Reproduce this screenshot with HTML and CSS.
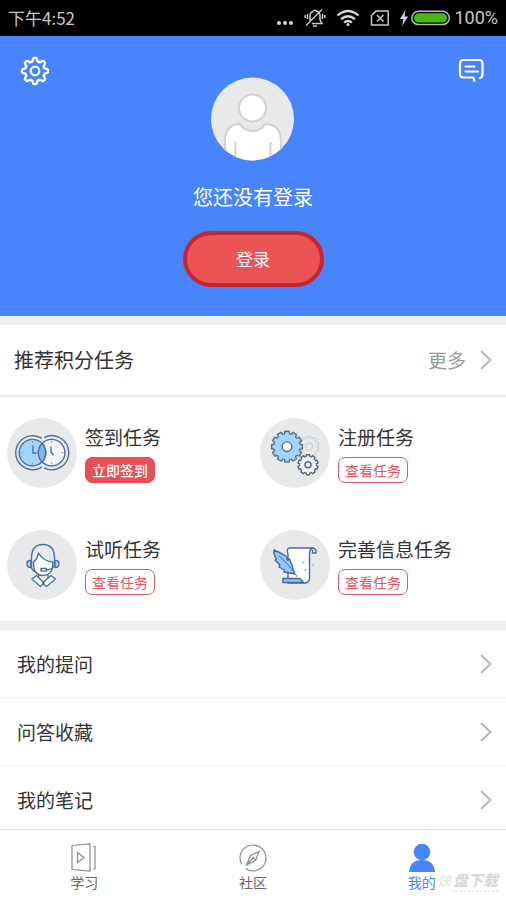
FILE: index.html
```html
<!DOCTYPE html>
<html lang="zh-CN">
<head>
<meta charset="utf-8">
<meta name="viewport" content="width=device-width, initial-scale=1">
<title>我的</title>
<link rel="stylesheet" href="styles.css">
</head>
<body>
<svg class="defs" aria-hidden="true">
  <defs>
    <path id="tooth8" d="M-3.800 -9.200C-2.900 -8.800 -2.500 -9.400 -2.300 -10.400L-1.900 -12.200Q-1.700 -13 -1 -13H1Q1.700 -13 1.900 -12.200L2.300 -10.400C2.500 -9.400 2.900 -8.800 3.800 -9.200"/>
    <path id="tooth12" d="M-3.3 -12.4L-2.5 -13L-2.1 -15.4H2.1L2.5 -13L3.3 -12.4"/>
    <path id="tooth10" d="M-2.6 -7.9L-1.9 -8.3L-1.5 -10H1.5L1.9 -8.3L2.6 -7.9"/>
    <g id="gear8">
      <use href="#tooth8"/><use href="#tooth8" transform="rotate(45)"/><use href="#tooth8" transform="rotate(90)"/><use href="#tooth8" transform="rotate(135)"/><use href="#tooth8" transform="rotate(180)"/><use href="#tooth8" transform="rotate(225)"/><use href="#tooth8" transform="rotate(270)"/><use href="#tooth8" transform="rotate(315)"/>
    </g>
    <g id="gear12">
      <circle r="13" stroke="none"/>
      <use href="#tooth12"/><use href="#tooth12" transform="rotate(30)"/><use href="#tooth12" transform="rotate(60)"/><use href="#tooth12" transform="rotate(90)"/><use href="#tooth12" transform="rotate(120)"/><use href="#tooth12" transform="rotate(150)"/><use href="#tooth12" transform="rotate(180)"/><use href="#tooth12" transform="rotate(210)"/><use href="#tooth12" transform="rotate(240)"/><use href="#tooth12" transform="rotate(270)"/><use href="#tooth12" transform="rotate(300)"/><use href="#tooth12" transform="rotate(330)"/>
    </g>
    <g id="gear10">
      <circle r="8.2" stroke="none"/>
      <use href="#tooth10"/><use href="#tooth10" transform="rotate(36)"/><use href="#tooth10" transform="rotate(72)"/><use href="#tooth10" transform="rotate(108)"/><use href="#tooth10" transform="rotate(144)"/><use href="#tooth10" transform="rotate(180)"/><use href="#tooth10" transform="rotate(216)"/><use href="#tooth10" transform="rotate(252)"/><use href="#tooth10" transform="rotate(288)"/><use href="#tooth10" transform="rotate(324)"/>
    </g>
  </defs>
</svg>

<div class="status">
  <span class="time">下午4:52</span>
  <div class="status-icons">
    <svg width="18" height="20" viewBox="0 0 18 20" fill="#d0d0d0"><circle cx="3" cy="15" r="2"/><circle cx="9" cy="15" r="2"/><circle cx="15" cy="15" r="2"/></svg>
    <svg width="22" height="20" viewBox="0 0 22 20" fill="none" stroke="#c8c8c8" stroke-width="1.5"><path d="M6 14V8Q6 4 9 3.500Q10 1.500 12.500 3Q16 4 16 8V12L18 15.500H8M9 18H13M2 17.500L18 1.500M3.500 6V11M1.200 7V10M18.500 6V11M20.800 7V10"/></svg>
    <svg width="24" height="20" viewBox="0 0 24 20" fill="none" stroke="#d8d8d8" stroke-width="2.300"><path d="M1.500 7.500Q12 -1.500 22.500 7.500M5 11.200Q12 5.200 19 11.200M8.200 14.600Q12 11.400 15.800 14.600"/><circle cx="12" cy="16.500" r="1.500" fill="#d8d8d8" stroke="none"/></svg>
    <svg width="20" height="20" viewBox="0 0 20 20" fill="none" stroke="#c8c8c8" stroke-width="1.500"><path d="M6 3H18.200V17H1.500V7.500ZM7 7L13.500 13.500M13.500 7L7 13.500"/></svg>
    <svg class="battery" width="48" height="20" viewBox="0 0 48 20"><path d="M5.500 2L0 11H3.500L2 18L8 8.500H4.500Z" fill="#d8d8d8"/><rect x="11.800" y="3.200" width="37.500" height="13.400" rx="6.700" fill="none" stroke="#b8b8b8" stroke-width="1.500"/><rect x="14" y="5.300" width="33" height="9.200" rx="4.600" fill="#45b814"/></svg>
    <span class="percent">100%</span>
  </div>
</div>

<main class="page">
  <header class="profile">
    <button class="icon-button" aria-label="设置">
      <svg width="30" height="30" viewBox="-15 -15 30 30" fill="none" stroke="#fff" stroke-width="2.300" stroke-linejoin="round" stroke-linecap="round"><use href="#gear8"/><circle r="4.300"/></svg>
    </button>
    <div class="account">
      <svg class="avatar" width="84" height="84" viewBox="0 0 84 84">
        <defs><clipPath id="round"><circle cx="41.500" cy="42" r="41.500"/></clipPath></defs>
        <g clip-path="url(#round)" stroke="#d2d2d2" stroke-width="2">
          <rect width="84" height="84" fill="#e8e9eb" stroke="none"/>
          <path d="M14 86V65Q14 47 29 47Q33 54 41.500 54Q50 54 54 47Q70 47 70 65V86Z" fill="#fff"/>
          <circle cx="41.500" cy="31" r="13.500" fill="#fff"/>
          <path d="M24.500 65V84M59.500 65V84" fill="none"/>
        </g>
      </svg>
      <p class="greeting">您还没有登录</p>
      <button class="login">登录</button>
    </div>
    <button class="icon-button" aria-label="消息">
      <svg width="30" height="30" viewBox="0 0 30 30" fill="none" stroke="#fff" stroke-width="2.200" stroke-linecap="round" stroke-linejoin="round"><path d="M24 22Q26.500 21 26.500 18V7.500Q26.500 4 23 4H7.500Q4 4 4 7.500V18Q4 21.500 7.500 21.500H17Q18 21.500 18.200 25M9.500 10.500H18.500M9.500 15.500H22"/></svg>
    </button>
  </header>

  <section class="block">
    <div class="block-head">
      <h2>推荐积分任务</h2>
      <a class="more" href="#more">更多
        <svg class="chevron" width="12" height="20" viewBox="0 0 12 20"><path d="M1 1L10.500 10L1 19"/></svg>
      </a>
    </div>
    <div class="tasks">
      <article class="task">
        <svg class="task-icon" viewBox="0 0 70 70">
          <circle cx="35" cy="35" r="35" fill="#e8e9eb"/>
          <g fill="none" stroke="#4d6f9b" stroke-width="1.400">
            <circle cx="44.600" cy="34.700" r="13.300" fill="#f3f4f6"/>
            <circle cx="25.500" cy="34.700" r="13.300" fill="#a3d4fb"/>
            <path d="M35 25.500A13.300 13.300 0 0 0 35 44A13.300 13.300 0 0 0 35 25.500" fill="#83b9e8"/>
            <path d="M34.800 20.300A17 17 0 1 0 34.800 49.100M37.200 19.500A17 17 0 1 1 37.200 49.900"/>
            <path d="M26 27.500V35H29.500M44 28.500V34L46.500 37"/>
            <path d="M25.500 23V25M25.500 44.500V46.500M14 34.700H16M44.600 23V25M44.600 44.500V46.500M54.500 34.700H56.500" stroke="#8199b5" stroke-width="1"/>
          </g>
        </svg>
        <div class="task-body"><h3>签到任务</h3><button class="tag tag-solid">立即签到</button></div>
      </article>
      <article class="task">
        <svg class="task-icon" viewBox="0 0 70 70">
          <circle cx="35" cy="35" r="35" fill="#e8e9eb"/>
          <g transform="translate(49 28.500)" fill="#e8e9eb" stroke="#cfd2d6" stroke-width="1.200"><use href="#gear10"/><circle r="3.500"/></g>
          <g transform="translate(27 28.700)" fill="#a3d4fb" stroke="#526f93" stroke-width="1.400" stroke-linejoin="round"><use href="#gear12"/><circle r="4.800" fill="#fff"/></g>
          <g transform="translate(48 46.700)" fill="#f0f1f3" stroke="#526580" stroke-width="1.400" stroke-linejoin="round"><use href="#gear10"/><circle r="3"/></g>
        </svg>
        <div class="task-body"><h3>注册任务</h3><button class="tag">查看任务</button></div>
      </article>
      <article class="task">
        <svg class="task-icon" viewBox="0 0 70 70">
          <circle cx="35" cy="35" r="35" fill="#e8e9eb"/>
          <g fill="none" stroke="#4b719f" stroke-width="1.400" stroke-linejoin="round">
            <path d="M26.500 32Q30 30 31.500 23Q36 31 45.800 32Q46.500 45 36 45.500Q26 45 26.500 32Z" fill="#fff"/>
            <path d="M24.500 38V28Q24.500 14.500 36 14.500Q47.500 14.500 47.500 28V35Q47 39 40 40M24.500 38Q25.500 41 29 42"/>
            <path d="M24 30.500H22.500Q20 31 20 34Q20 37.500 24 37.500ZM48 30.500H49.500Q52 31 52 34Q52 37.500 48 37.500Z" fill="#a3d4fb"/>
            <rect x="34" y="38.500" width="5.500" height="2.600" fill="#fff"/>
            <path d="M31.500 45V47.500M41 45V47.500"/>
            <path d="M25 49L29.500 45.500L37 53L33.500 56.500ZM48.500 49L44 45.500L35.500 53L39.500 56.500Z" fill="#fff"/>
          </g>
        </svg>
        <div class="task-body"><h3>试听任务</h3><button class="tag">查看任务</button></div>
      </article>
      <article class="task">
        <svg class="task-icon" viewBox="0 0 70 70">
          <circle cx="35" cy="35" r="35" fill="#e8e9eb"/>
          <g fill="none" stroke="#416b9e" stroke-width="1.400" stroke-linejoin="round" stroke-linecap="round">
            <path d="M30 18H53Q49.500 19 49.500 24V48Q49.500 53 45 53H28V24Q26 18 30 18Z" fill="#fff"/>
            <path d="M52 18Q56.500 18 56 23H52.500V20.500"/>
            <path d="M23 48.500H40L43.500 52.500H23Z" fill="#94bdf3"/>
            <path d="M14 20Q21 23 26 26L27.500 30L29.500 29L32 35L33 39L34.500 44L30 43L24 42L24.500 40L19 37L20 35L15 30L16.500 29Q13.500 25 14 20Z" fill="#91c9fc"/>
            <path d="M19 26Q29 34 37 46.500" stroke-width="1"/>
          </g>
          <g fill="#bdc6d3"><circle cx="43.500" cy="32.500" r="1.300"/><circle cx="53" cy="35" r="1.300"/><circle cx="45.500" cy="40" r="1.300"/></g>
        </svg>
        <div class="task-body"><h3>完善信息任务</h3><button class="tag">查看任务</button></div>
      </article>
    </div>
  </section>

  <nav class="block links" aria-label="我的内容">
    <a href="#questions">我的提问<svg class="chevron" width="12" height="20" viewBox="0 0 12 20"><path d="M1 1L10.500 10L1 19"/></svg></a>
    <a href="#favorites">问答收藏<svg class="chevron" width="12" height="20" viewBox="0 0 12 20"><path d="M1 1L10.500 10L1 19"/></svg></a>
    <a href="#notes">我的笔记<svg class="chevron" width="12" height="20" viewBox="0 0 12 20"><path d="M1 1L10.500 10L1 19"/></svg></a>
  </nav>
</main>

<nav class="tabs" aria-label="主导航">
  <a href="#study">
    <svg width="28" height="30" viewBox="0 0 28 30" fill="none" stroke="#8c8c8c" stroke-width="1.200"><path d="M2 2.500L20 1V28L2 26.500ZM23 3.500H25V26H23M7.500 9.500V19.500L14 14.500Z"/></svg>
    学习
  </a>
  <a href="#community">
    <svg width="28" height="30" viewBox="0 0 28 30" fill="none" stroke="#8c8c8c" stroke-width="1.200"><circle cx="14" cy="15" r="13" stroke-dasharray="28 6 48"/><path d="M20 8.500L16.500 17.500L7.500 22L11.500 12.500ZM7.500 22L14.500 14.500L16.500 17.500"/></svg>
    社区
  </a>
  <a class="active" href="#me" aria-current="page">
    <svg width="28" height="30" viewBox="0 0 28 30" fill="#4684fb"><circle cx="14" cy="9" r="8.300"/><path d="M1 29Q2 17 14 17Q26 17 27 29Z"/></svg>
    我的
  </a>
  <div class="watermark"><span class="leaf">快</span><span class="site">盘下载</span></div>
</nav>
</body>
</html>
```
FILE: styles.css
```css
* { box-sizing: border-box; }

body {
  margin: 0;
  height: 100vh;
  display: flex;
  flex-direction: column;
  background: #fff;
  color: #333;
  font-family: "Noto Sans CJK SC", sans-serif;
  font-size: 19px;
  line-height: 28px;
}

h2, h3, p { margin: 0; font-size: inherit; font-weight: 400; }
a { color: inherit; text-decoration: none; }
button { font: inherit; cursor: pointer; }
svg { display: block; flex: none; }
.defs { position: absolute; width: 0; height: 0; }

.status {
  flex: none;
  display: flex;
  align-items: center;
  justify-content: space-between;
  height: 36px;
  padding: 0 8px;
  background: #000;
  color: #c8c8c8;
  font-size: 17px;
}
.status-icons { display: flex; align-items: center; gap: 10px; }
.battery { margin-right: -4px; overflow: visible; }
.percent { font-family: Roboto, sans-serif; font-size: 18px; }

.page { flex: 1; min-height: 0; overflow-y: auto; scrollbar-width: none; }

.profile {
  display: flex;
  align-items: flex-start;
  justify-content: space-between;
  padding: 20px 20px 29px;
  background: #4885fd;
  color: #fff;
}
.icon-button { padding: 0; border: 0; background: none; }
.account {
  display: flex;
  flex-direction: column;
  align-items: center;
  padding-top: 21px;
}
.greeting { margin: 22px 0 20px; font-size: 20px; }
.login {
  width: 141px;
  height: 56px;
  border: 4px solid #c7252d;
  border-radius: 28px;
  background: #eb5355;
  color: #fff;
  font-size: 17px;
}

.block { border-top: 9px solid #efefef; }
.block-head {
  display: flex;
  align-items: center;
  justify-content: space-between;
  height: 72px;
  padding: 0 14px;
  border-bottom: 2px solid #e9e9e9;
}
.block-head h2 { font-size: 20px; }
.more { display: flex; align-items: center; gap: 14px; color: #999; }
.chevron path { fill: none; stroke: #b4b4b4; stroke-width: 2; }

.tasks {
  display: grid;
  grid-template-columns: 1fr 1fr;
  row-gap: 42px;
  padding: 21px 0;
}
.task { display: flex; gap: 8px; padding-left: 7px; }
.task-icon { width: 70px; height: 70px; }
.task-body { padding-top: 5px; }
.tag {
  display: block;
  width: 70px;
  height: 26px;
  margin-top: 6px;
  padding: 0;
  border: 1px solid #e0575c;
  border-radius: 7px;
  background: #fff;
  color: #e0575c;
  font-size: 14px;
  line-height: 24px;
}
.tag-solid { background: #e94f57; border-color: #e94f57; color: #fff; font-weight: 500; }

.links a {
  display: flex;
  align-items: center;
  justify-content: space-between;
  height: 68px;
  padding: 0 14px 0 17px;
  border-bottom: 1px solid #f1f1f1;
}

.tabs {
  position: relative;
  flex: none;
  display: grid;
  grid-template-columns: repeat(3, 1fr);
  height: 71px;
  padding-top: 13px;
  border-top: 1px solid #e2e2e2;
  background: #fff;
  color: #666;
  font-size: 14px;
  line-height: 18px;
}
.tabs a { display: flex; flex-direction: column; align-items: center; }
.tabs .active { color: #4684fb; }

.watermark {
  position: absolute;
  right: 8px;
  bottom: 8px;
  display: flex;
  gap: 2px;
  font-size: 15px;
  font-weight: 700;
  font-style: italic;
  line-height: 20px;
  pointer-events: none;
}
.leaf { color: #e4f3d5; font-size: 14px; }
.site { color: #d6d6d6; border-bottom: 2px dotted #ececec; }
```
